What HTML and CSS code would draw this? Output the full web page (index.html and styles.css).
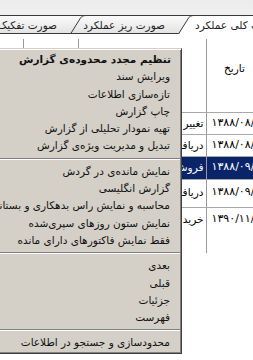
FILE: index.html
```html
<!DOCTYPE html>
<html lang="fa">
<head>
<meta charset="utf-8">
<link rel="stylesheet" href="styles.css">
</head>
<body>
<div class="page">
  <div class="tabbar">
    <div class="tab tab3">
      <svg class="tabshape" width="140" height="19" viewBox="0 0 140 19"><defs><linearGradient id="g3" x1="0" y1="0" x2="0" y2="1"><stop offset="0" stop-color="#fbfbfb"/><stop offset="1" stop-color="#e2e2e2"/></linearGradient></defs><path d="M0.5 19 L10.5 3 Q12 0.5 15 0.5 L140 0.5 L140 19 Z" fill="url(#g3)"/><path d="M0.5 19 L10.5 3 Q12 0.5 15 0.5 L140 0.5 M0 18.5 L140 18.5" fill="none" stroke="#3a3a3a" stroke-width="1"/></svg>
      <span class="tablabel">صورت تفکیک</span>
    </div>
    <div class="tab tab2">
      <svg class="tabshape" width="125" height="19" viewBox="0 0 125 19"><defs><linearGradient id="g2" x1="0" y1="0" x2="0" y2="1"><stop offset="0" stop-color="#fbfbfb"/><stop offset="1" stop-color="#e2e2e2"/></linearGradient></defs><path d="M0.5 19 L10.5 3 Q12 0.5 15 0.5 L125 0.5 L125 19 Z" fill="url(#g2)"/><path d="M0.5 19 L10.5 3 Q12 0.5 15 0.5 L125 0.5 M0 18.5 L125 18.5" fill="none" stroke="#3a3a3a" stroke-width="1"/></svg>
      <span class="tablabel">صورت ریز عملکرد</span>
    </div>
    <div class="tab tab1">
      <svg class="tabshape" width="120" height="19" viewBox="0 0 120 19"><path d="M0.5 19 L10.5 3 Q12 0.5 15 0.5 L120 0.5 L120 19 Z" fill="#ffffff"/><path d="M0.5 19 L10.5 3 Q12 0.5 15 0.5 L120 0.5" fill="none" stroke="#3a3a3a" stroke-width="1"/></svg>
      <span class="tablabel">صورت کلی عملکرد</span>
    </div>
  </div>

  <div class="content">
    <table class="grid">
      <colgroup>
        <col class="c1"><col class="c2"><col class="c3"><col class="c4"><col class="c5">
      </colgroup>
      <tr class="head">
        <td></td><td></td><td colspan="2"></td><td class="hdate">تاریخ</td>
      </tr>
      <tr class="r1"><td></td><td></td><td></td><td class="type">تغییر</td><td class="date">۱۳۸۸/۰۸/۱۱</td></tr>
      <tr class="r2"><td></td><td></td><td></td><td class="type">دریافت</td><td class="date">۱۳۸۸/۰۸/۲۴</td></tr>
      <tr class="r3 sel"><td></td><td></td><td></td><td class="type">فروش</td><td class="date">۱۳۸۸/۰۹/۰۲</td></tr>
      <tr class="r4"><td></td><td></td><td></td><td class="type">دریافت</td><td class="date">۱۳۸۸/۰۹/۱۵</td></tr>
      <tr class="r5 last"><td></td><td></td><td></td><td class="type">خرید</td><td class="date">۱۳۹۰/۱۱/۰۵</td></tr>
    </table>
  </div>

  <div class="menu">
    <div class="item bold">تنظیم مجدد محدوده‌ی گزارش</div>
    <div class="item">ویرایش سند</div>
    <div class="item">تازه‌سازی اطلاعات</div>
    <div class="item">چاپ گزارش</div>
    <div class="item">تهیه نمودار تحلیلی از گزارش</div>
    <div class="item">تبدیل و مدیریت ویژه‌ی گزارش</div>
    <div class="sep"></div>
    <div class="item">نمایش مانده‌ی در گردش</div>
    <div class="item">گزارش انگلیسی</div>
    <div class="item">محاسبه و نمایش راس بدهکاری و بستانکاری</div>
    <div class="item">نمایش ستون روزهای سپری‌شده</div>
    <div class="item">فقط نمایش فاکتورهای دارای مانده</div>
    <div class="sep"></div>
    <div class="item">بعدی</div>
    <div class="item">قبلی</div>
    <div class="item">جزئیات</div>
    <div class="item">فهرست</div>
    <div class="sep"></div>
    <div class="item">محدودسازی و جستجو در اطلاعات</div>
  </div>
</div>
</body>
</html>
```
FILE: styles.css
```css
html, body {
  margin: 0;
  padding: 0;
  width: 253px;
  height: 360px;
  overflow: hidden;
  background: #ffffff;
}

.page {
  position: relative;
  width: 253px;
  height: 360px;
  overflow: hidden;
  font-family: Tahoma, "DejaVu Sans", sans-serif;
  font-size: 10.5px;
  color: #000;
}

.tabbar {
  display: flex;
  align-items: flex-end;
  height: 34px;
  background: linear-gradient(#ececec, #f4f4f4);
}

.tab {
  position: relative;
  height: 19px;
  flex: none;
  direction: rtl;
  box-sizing: border-box;
  color: #1e1e1e;
}

.tabshape {
  position: absolute;
  left: 0;
  top: 0;
  display: block;
}

.tablabel {
  position: relative;
  display: block;
  line-height: 19px;
  padding-top: 1px;
  white-space: nowrap;
}

.tab3 {
  width: 140px;
  margin-left: -45px;
  text-align: right;
  padding-right: 38px;
}

.tab2 {
  width: 125px;
  margin-left: -25px;
  text-align: right;
  padding-right: 30px;
}

.tab1 {
  width: 120px;
  margin-left: -17px;
  text-align: left;
  padding-left: 17px;
}

.content {
  padding-top: 5px;
}

.grid {
  border-collapse: collapse;
  table-layout: fixed;
  width: 253px;
}

.c1 { width: 23px; }
.c2 { width: 55px; }
.c3 { width: 103px; }
.c4 { width: 25px; }
.c5 { width: 47px; }

.grid td {
  border-left: 1px solid #9a9a9a;
  border-right: 1px solid #9a9a9a;
  border-bottom: 1px solid #a8a8a8;
  padding: 0;
  vertical-align: top;
  white-space: nowrap;
  overflow: hidden;
  line-height: 14px;
}

.grid td:first-child { border-left: none; }
.grid td:last-child { border-right: none; }

.head td { height: 51px; }
.r1 td { height: 18px; }
.r2 td { height: 18px; }
.r3 td { height: 19px; }
.r4 td { height: 22px; }
.r5 td { height: 41px; border-bottom: none; }

.hdate {
  direction: rtl;
  text-align: right;
  padding: 22px 8px 0 0 !important;
}

.type {
  direction: rtl;
  text-align: right;
  padding: 3px 2px 0 0 !important;
}

.date {
  direction: ltr;
  text-align: left;
  padding: 3px 0 0 5px !important;
  font-size: 11px;
}

.r4 .type, .r4 .date { padding-top: 5px !important; }
.r5 .type, .r5 .date { padding-top: 4px !important; }

.sel td.type, .sel td.date {
  background: #0a246a;
  color: #ffffff;
}

.menu {
  position: absolute;
  left: -60px;
  top: 48px;
  width: 242px;
  box-sizing: border-box;
  background: #d4d0c8;
  border: 1px solid;
  border-color: #d4d0c8 #404040 #404040 #d4d0c8;
  box-shadow: inset 1px 1px #ffffff, inset -1px -1px #808080;
  padding: 2px 1px 1px;
  direction: rtl;
  color: #111;
}

.item {
  height: 17.3px;
  line-height: 17.3px;
  padding-right: 10px;
  white-space: nowrap;
  text-align: right;
}

.item.bold {
  font-weight: bold;
  padding-right: 9px;
}

.sep {
  height: 0;
  margin: 3px 0 3px 2px;
  border-top: 1px solid #808080;
  border-bottom: 1px solid #ffffff;
}
```
